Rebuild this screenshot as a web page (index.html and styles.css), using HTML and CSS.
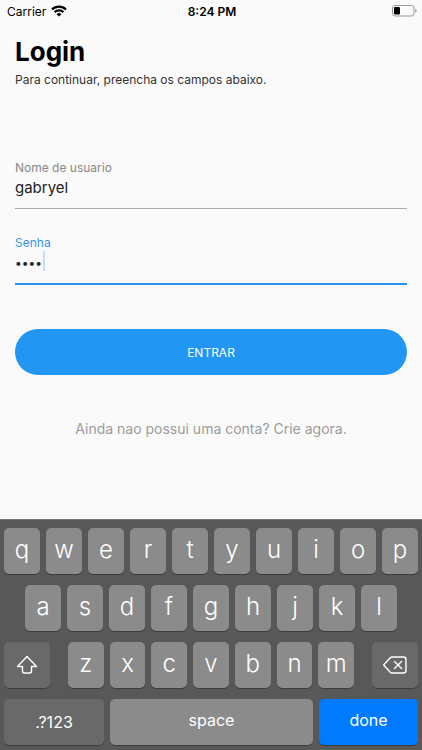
FILE: index.html
```html
<!DOCTYPE html>
<html lang="pt-BR">
<head>
<meta charset="utf-8">
<meta name="viewport" content="width=device-width, initial-scale=1">
<title>Login</title>
<link rel="stylesheet" href="styles.css">
</head>
<body>
<header class="status">
  <div class="carrier"><span>Carrier</span>
    <svg width="16" height="12" viewBox="0 0 16 12" aria-hidden="true"><g fill="none" stroke="#000" stroke-width="2.2"><path d="M1 4.4a10 10 0 0 1 14 0"/><path d="M3.6 7.1a6.3 6.3 0 0 1 8.8 0"/></g><path d="M8 11.6 5.6 9.2a3.4 3.4 0 0 1 4.8 0z"/></svg>
  </div>
  <time>8:24 PM</time>
  <svg class="battery" width="25" height="12" viewBox="0 0 25 12" aria-hidden="true"><rect x=".5" y=".5" width="21.5" height="10.5" rx="2.5" fill="none" stroke="#999"/><rect x="2" y="2" width="6" height="7.5" rx="1.2"/><path d="M23.3 4v3.6q1.3-.5 1.3-1.8T23.3 4z" fill="#888"/></svg>
</header>
<main class="login">
  <h1>Login</h1>
  <p class="intro">Para continuar, preencha os campos abaixo.</p>
  <form>
    <div class="field">
      <label for="user">Nome de usuario</label>
      <input id="user" type="text" value="gabryel">
    </div>
    <div class="field active">
      <label for="password">Senha</label>
      <input id="password" type="password" value="1234">
      <span class="caret"></span>
    </div>
    <button class="submit" type="button">ENTRAR</button>
  </form>
  <a class="signup" href="#">Ainda nao possui uma conta? Crie agora.</a>
</main>
<section class="keyboard" aria-label="Teclado">
  <div class="row">
    <button>q</button><button>w</button><button>e</button><button>r</button><button>t</button><button>y</button><button>u</button><button>i</button><button>o</button><button>p</button>
  </div>
  <div class="row middle">
    <button>a</button><button>s</button><button>d</button><button>f</button><button>g</button><button>h</button><button>j</button><button>k</button><button>l</button>
  </div>
  <div class="row lower">
    <button class="dark" aria-label="Shift"><svg width="22" height="20" viewBox="0 0 22 20" fill="none" stroke="#fff" stroke-width="1.4" stroke-linejoin="round"><path d="M11 1.500 1.500 11.500H6.500V16q0 2 2 2h5q2 0 2-2v-4.500h5z"/></svg></button>
    <div class="row">
      <button>z</button><button>x</button><button>c</button><button>v</button><button>b</button><button>n</button><button>m</button>
    </div>
    <button class="dark" aria-label="Delete"><svg width="24" height="18" viewBox="0 0 24 18" fill="none" stroke="#fff" stroke-width="1.4" stroke-linejoin="round" stroke-linecap="round"><path d="M9 1h11.500q2.500 0 2.500 2.500v11q0 2.500-2.500 2.500H9q-1 0-1.700-.7L1 9.600q-.5-.6 0-1.200l6.300-6.700Q8 1 9 1zM11.500 5.500l7 7m0-7-7 7"/></svg></button>
  </div>
  <div class="row bottom">
    <button class="dark">.?123</button><button class="space">space</button><button class="done">done</button>
  </div>
</section>
</body>
</html>
```
FILE: styles.css
```css
* { box-sizing: border-box; }
body {
  margin: 0;
  min-height: 100vh;
  display: flex;
  flex-direction: column;
  background: #fafafa;
  color: #000;
  font-family: Inter, "Liberation Sans", sans-serif;
}
button, input { font-family: inherit; border: 0; margin: 0; padding: 0; }
svg { display: block; }
.status {
  display: grid;
  grid-template-columns: 1fr auto 1fr;
  align-items: center;
  height: 22px;
  padding: 0 5px 0 7px;
  font-size: 12px;
}
.carrier { display: flex; align-items: center; gap: 5px; }
.status time { font-weight: 600; }
.battery { justify-self: end; }
.login {
  flex: 1;
  display: flex;
  flex-direction: column;
  padding: 14px 15px;
}
h1 { margin: 0; font-size: 26px; line-height: 32px; font-weight: 700; }
.intro { margin: 4px 0 72px; font-size: 12px; line-height: 16px; color: #333; }
.field {
  position: relative;
  display: flex;
  flex-direction: column;
  height: 49px;
  margin-bottom: 26px;
  border-bottom: 1px solid #aaa;
}
.field label { font-size: 12px; line-height: 16px; color: #888; }
.field input {
  width: 100%;
  height: 22px;
  background: none;
  outline: none;
  font-size: 15px;
  color: #222;
}
.active { height: 50px; margin-bottom: 44px; border-bottom: 2px solid #2b91e6; }
.active label { color: #3796e4; }
.field input[type="password"] { font-size: 12px; }
.caret {
  position: absolute;
  left: 28px;
  top: 16px;
  width: 2px;
  height: 20px;
  background: #c3def6;
}
.submit {
  display: block;
  width: 100%;
  height: 46px;
  border-radius: 23px;
  background: #2196f3;
  color: #fff;
  font-size: 12px;
}
.signup {
  align-self: center;
  margin-top: 44px;
  font-size: 14px;
  line-height: 20px;
  color: #9b9b9b;
  text-decoration: none;
}
.keyboard {
  display: flex;
  flex-direction: column;
  gap: 11px;
  padding: 8px 4px 5px;
  border-top: 1px solid #777;
  background: #585858;
}
.row { display: flex; gap: 6px; }
.row button {
  flex: 1 1 0;
  display: flex;
  align-items: center;
  justify-content: center;
  height: 46px;
  min-width: 0;
  padding-bottom: 4px;
  border-radius: 5px;
  background: #8b8b8b;
  box-shadow: 0 1px 0 #3d3d3d;
  color: #fff;
  font-size: 24px;
  font-weight: 300;
}
.middle { padding: 0 21px; }
.lower { display: grid; grid-template-columns: 46fr 286fr 46fr; gap: 18px; }
.row .dark { background: #696969; padding: 0; }
.bottom button { font-size: 16px; font-weight: 400; }
.bottom .dark { flex-grow: 100; }
.bottom .space { flex-grow: 203; }
.bottom .done { flex-grow: 99; background: #007aff; }
```
